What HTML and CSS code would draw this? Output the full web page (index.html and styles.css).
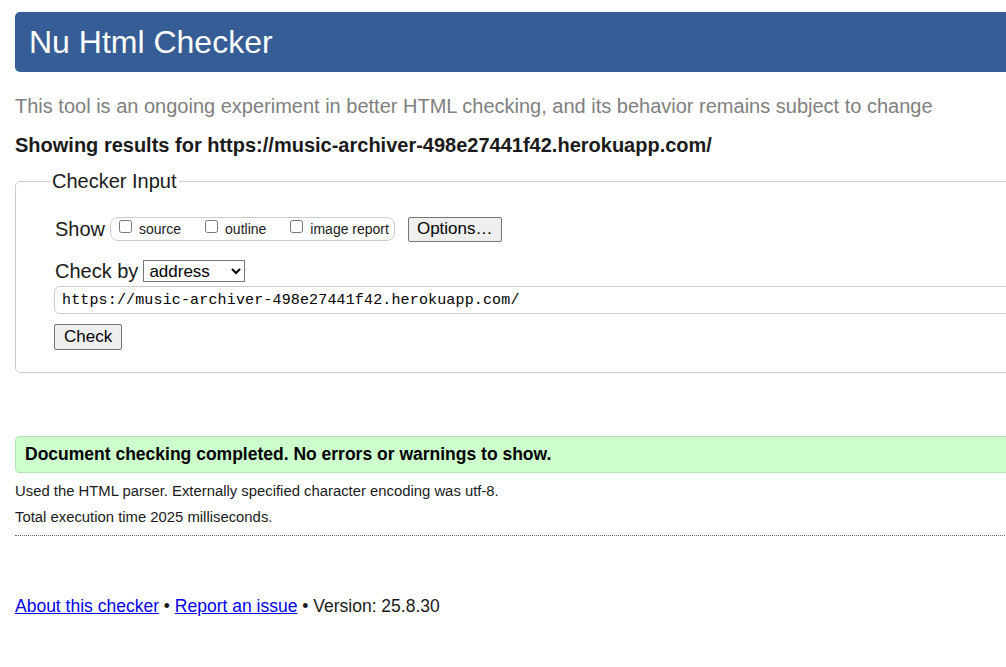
FILE: index.html
```html
<!DOCTYPE html>
<html lang="en">
<head>
<meta charset="utf-8">
<title>Nu Html Checker</title>
<link rel="stylesheet" href="styles.css">
</head>
<body>
<div class="page">
  <h1 class="banner">Nu Html Checker</h1>
  <p class="tagline">This tool is an ongoing experiment in better HTML checking, and its behavior remains subject to change</p>
  <p class="showing">Showing results for https://music-archiver-498e27441f42.herokuapp.com/</p>
  <fieldset class="input-box">
    <legend class="legend">Checker Input</legend>
    <div class="show-row">
      <span class="label">Show</span>
      <span class="check-group">
        <label class="opt"><input type="checkbox" class="cb">source</label>
        <label class="opt"><input type="checkbox" class="cb">outline</label>
        <label class="opt"><input type="checkbox" class="cb">image report</label>
      </span>
      <button class="btn options">Options…</button>
    </div>
    <div class="by-row">
      <span class="label">Check by</span>
      <select class="sel"><option>address</option></select>
    </div>
    <input class="url" type="text" value="https://music-archiver-498e27441f42.herokuapp.com/">
    <div class="submit-row"><button class="btn check">Check</button></div>
  </fieldset>
  <p class="success">Document checking completed. No errors or warnings to show.</p>
  <div class="details">
    <p class="detail">Used the HTML parser. Externally specified character encoding was utf-8.</p>
    <p class="detail">Total execution time 2025 milliseconds.</p>
  </div>
  <hr class="rule">
  <p class="footer"><a href="#">About this checker</a> • <a href="#">Report an issue</a> • Version: 25.8.30</p>
</div>
</body>
</html>
```
FILE: styles.css
```css
html, body {
  margin: 0;
  padding: 0;
  overflow: hidden;
  background: #fff;
}
body {
  font-family: "Liberation Sans", Arial, sans-serif;
  color: #000;
}
.page {
  width: 1100px;
  padding: 12px 0 0 15px;
}
.banner {
  margin: 0;
  height: 60px;
  box-sizing: border-box;
  background: #365d95;
  color: #fff;
  font-size: 32px;
  font-weight: normal;
  line-height: 60px;
  padding-left: 14px;
  border-radius: 5px;
}
.tagline {
  margin: 22px 0 0;
  font-size: 20px;
  line-height: 24px;
  color: #808080;
}
.showing {
  margin: 15px 0 0;
  font-size: 20px;
  line-height: 24px;
  font-weight: bold;
  color: #1a1a1a;
}
.input-box {
  margin: 13px 0 0;
  border: 1px solid #cccccc;
  border-radius: 5px;
  padding: 23px 0 22px 38px;
}
.legend {
  font-size: 20px;
  padding: 0 2px;
  margin-left: -4px;
  color: #1a1a1a;
}
.show-row {
  display: flex;
  align-items: center;
  height: 26px;
}
.label {
  font-size: 20px;
  color: #1a1a1a;
  margin-left: 1px;
}
.check-group {
  display: inline-flex;
  align-items: center;
  margin-left: 5px;
  height: 22px;
  border: 1px solid #cccccc;
  border-radius: 8px;
  padding: 0 5px 0 8px;
}
.opt {
  font-size: 14px;
  color: #1a1a1a;
  display: inline-flex;
  align-items: center;
  margin-right: 24px;
}
.opt:last-child {
  margin-right: 0;
}
.cb {
  margin: 0 7px 0 0;
  position: relative;
  top: -3px;
}
.btn {
  font-family: "Liberation Sans", Arial, sans-serif;
  font-size: 17px;
  color: #000;
  background: #efefef;
  border: 1px solid #767676;
  border-radius: 2px;
  padding: 0 8px;
  height: 25px;
}
.options {
  margin-left: 13px;
}
.by-row {
  display: flex;
  align-items: center;
  margin-top: 17px;
  height: 24px;
}
.sel {
  margin-left: 5px;
  font-family: "Liberation Sans", Arial, sans-serif;
  font-size: 17px;
  width: 102px;
  height: 22px;
  border: 1px solid #767676;
  border-radius: 0;
  background: #fff;
  color: #000;
  padding: 0 1px;
}
.url {
  display: block;
  margin-top: 3px;
  width: 1000px;
  height: 28px;
  box-sizing: border-box;
  border: 1px solid #cccccc;
  border-radius: 6px;
  padding: 0 7px;
  font-family: "Liberation Mono", "DejaVu Sans Mono", monospace;
  font-size: 15px;
  letter-spacing: 0.15px;
  color: #000;
}
.submit-row {
  margin-top: 10px;
}
.check {
  height: 26px;
  padding: 0 9px;
}
.success {
  margin: 63px 0 0;
  background: #ccffcc;
  border: 1px solid #b7e2b7;
  border-radius: 4px;
  height: 37px;
  box-sizing: border-box;
  line-height: 35px;
  padding-left: 9px;
  font-size: 17.5px;
  font-weight: bold;
  color: #000;
}
.details {
  margin-top: 5px;
}
.detail {
  margin: 0;
  font-size: 14.85px;
  line-height: 26px;
  color: #1a1a1a;
}
.rule {
  margin: 5px 0 0;
  border: 0;
  border-top: 1px dotted #666;
  height: 0;
}
.footer {
  margin: 59px 0 0;
  font-size: 17.5px;
  line-height: 22px;
  color: #1a1a1a;
}
.footer a {
  color: #0000ee;
}
```
